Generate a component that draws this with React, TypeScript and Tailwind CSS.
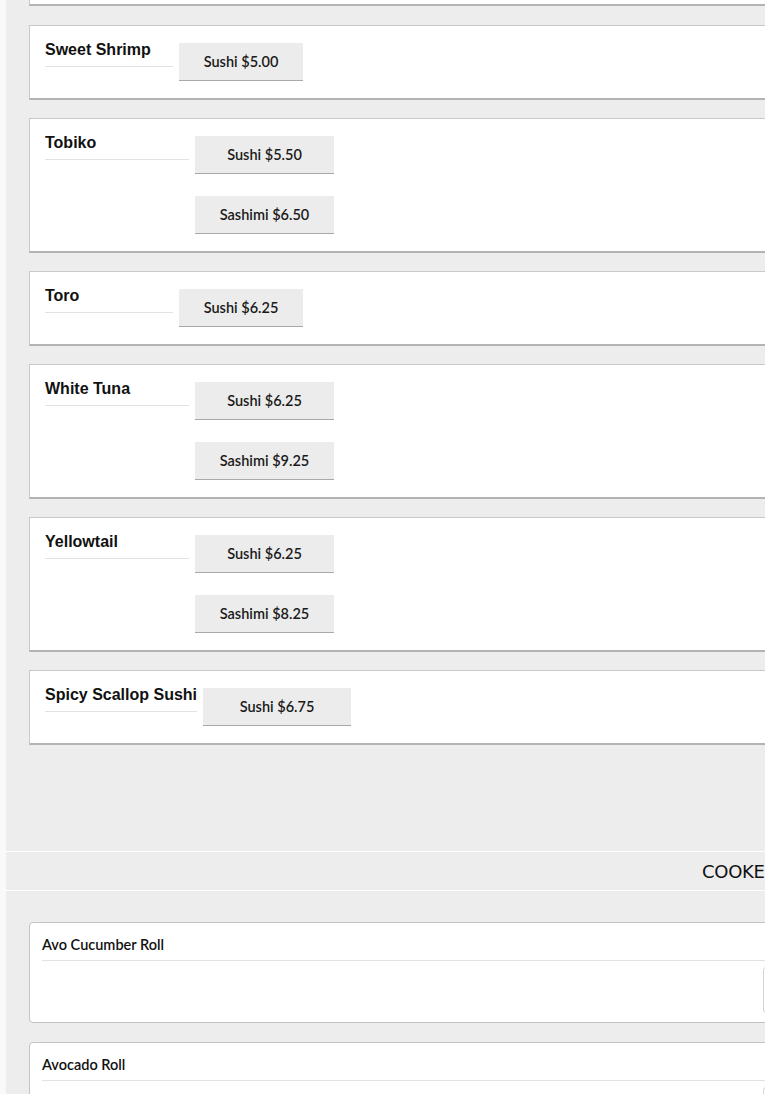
type Item = { name: string; titleW: string; btnW: string; prices: string[] };

const rawItems: Item[] = [
  { name: "Sweet Shrimp", titleW: "w-[128px]", btnW: "w-[124px]", prices: ["Sushi $5.00"] },
  { name: "Tobiko", titleW: "w-[144px]", btnW: "w-[139px]", prices: ["Sushi $5.50", "Sashimi $6.50"] },
  { name: "Toro", titleW: "w-[128px]", btnW: "w-[124px]", prices: ["Sushi $6.25"] },
  { name: "White Tuna", titleW: "w-[144px]", btnW: "w-[139px]", prices: ["Sushi $6.25", "Sashimi $9.25"] },
  { name: "Yellowtail", titleW: "w-[144px]", btnW: "w-[139px]", prices: ["Sushi $6.25", "Sashimi $8.25"] },
  { name: "Spicy Scallop Sushi", titleW: "w-[152px]", btnW: "w-[148px]", prices: ["Sushi $6.75"] },
];

const cooked = ["Avo Cucumber Roll", "Avocado Roll"];

const RawCard = ({ item }: { item: Item }) => (
  <div className="flex bg-white border border-[#c9c9c9] border-b-2 border-b-[#b3b3b3] pl-[15px] mb-[18px]">
    <div
      className={`${item.titleW} mt-[15px] h-[26px] border-b border-[#e2e2e2] shrink-0 font-['Liberation_Sans',Arial,sans-serif] font-bold text-[16px] leading-[18px] text-[#111] whitespace-nowrap`}
    >
      {item.name}
    </div>
    <div className="ml-[6px] flex flex-col gap-[22px] py-[17px]">
      {item.prices.map((p) => (
        <button
          key={p}
          className={`${item.btnW} h-[38px] bg-[#ececec] border-b border-[#a9a9a9] font-['Lato',sans-serif] font-semibold text-[14.5px] text-[#1a1a1a]`}
        >
          {p}
        </button>
      ))}
    </div>
  </div>
);

const CookedCard = ({ name }: { name: string }) => (
  <div className="bg-white border border-[#c4c4c4] rounded-[4px] px-[12px] mb-[19px] h-[101px]">
    <div className="pt-[13px] pb-[7px] border-b border-[#e2e2e2] font-['Lato',sans-serif] font-semibold text-[14.5px] leading-[17px] text-[#111]">
      {name}
    </div>
    <div className="flex pt-[6px]">
      <div className="ml-[721px] w-[120px] h-[46px] border border-[#d4d4d4] rounded-[3px] bg-white" />
    </div>
  </div>
);

export default function App() {
  return (
    <div className="w-[765px] h-[1094px] overflow-hidden bg-[#f9f9f9] pl-[6px]">
      <div className="w-[1400px] bg-[#ededed] min-h-[1094px]">
        <div className="px-[23px]">
          <div className="h-[6px] bg-white border-x border-[#c9c9c9] border-b-2 border-b-[#b3b3b3] mb-[19px]" />
          {rawItems.map((it) => (
            <RawCard key={it.name} item={it} />
          ))}
        </div>
        <div className="h-[88px]" />
        <div className="border-y border-white h-[40px] flex items-center pl-[696px]">
          <span className="font-['DejaVu_Sans',sans-serif] text-[18px] text-[#111] tracking-[-0.3px]">COOKED</span>
        </div>
        <div className="px-[23px] pt-[31px]">
          {cooked.map((c) => (
            <CookedCard key={c} name={c} />
          ))}
        </div>
      </div>
    </div>
  );
}
